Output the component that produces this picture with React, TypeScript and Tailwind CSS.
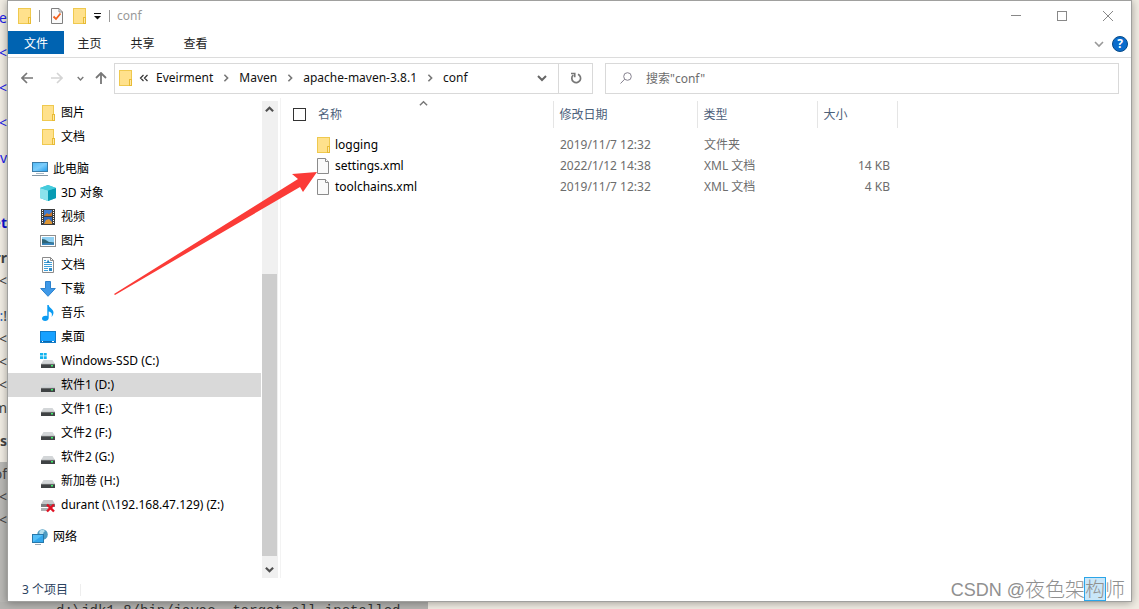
import type { ReactNode } from 'react';

type IconProps = { className?: string };

function FolderIcon({ className = '' }: IconProps) {
  return (
    <svg className={`h-4 w-3.5 shrink-0 ${className}`} viewBox="0 0 14 16" aria-hidden="true">
      <rect x="0.5" y="0.5" width="12" height="15" fill="#ffe18c" stroke="#efc94f" />
      <rect x="10.5" y="9.5" width="2" height="6" fill="#ffe9a6" stroke="#e8bb35" />
    </svg>
  );
}

function FileIcon() {
  return (
    <svg className="h-4 w-3.5 shrink-0" viewBox="0 0 14 16" aria-hidden="true">
      <path d="M0.5 0.5H8.5L11.5 3.5V15.5H0.5Z" fill="#fafafa" stroke="#8b8b8b" />
      <path d="M8.5 0.5V3.5H11.5" fill="#fff" stroke="#8b8b8b" />
    </svg>
  );
}

function CheckedPageIcon() {
  return (
    <svg className="h-4 w-3 shrink-0" viewBox="0 0 12 16" aria-hidden="true">
      <path d="M0.5 0.5H8L11.5 4V15.5H0.5Z" fill="#fafafa" stroke="#7f7f7f" />
      <path d="M8 0.5V4H11.5" fill="none" stroke="#8b8b8b" />
      <path d="M2.5 8.5L5 11L9.5 5.5" fill="none" stroke="#f2601d" strokeWidth="1.8" />
    </svg>
  );
}

function Icon16({ children }: { children: ReactNode }) {
  return (
    <svg className="h-4 w-4 shrink-0" viewBox="0 0 16 16" aria-hidden="true">
      {children}
    </svg>
  );
}

function FolderSmall() {
  return (
    <Icon16>
      <rect x="2.5" y="0.5" width="11" height="15" fill="#ffe18c" stroke="#efc94f" />
      <rect x="12.5" y="9.5" width="2" height="6" fill="#ffe9a6" stroke="#e8bb35" />
    </Icon16>
  );
}

function ComputerIcon() {
  return (
    <Icon16>
      <defs>
        <linearGradient id="screen" x1="0" y1="0" x2="1" y2="1">
          <stop offset="0" stopColor="#4db8f5" />
          <stop offset="0.5" stopColor="#7ccdfb" />
          <stop offset="1" stopColor="#1f9cec" />
        </linearGradient>
      </defs>
      <rect x="0.5" y="1.5" width="15" height="9" fill="url(#screen)" stroke="#3a7ca8" />
      <rect x="4" y="12" width="8" height="1" fill="#a9bac6" />
      <rect x="0" y="14" width="16" height="1" fill="#8496a3" />
    </Icon16>
  );
}

function CubeIcon() {
  return (
    <Icon16>
      <path d="M8 0L16 3V13L8 16L0 13V3Z" fill="#35c0d4" />
      <path d="M0 3L8 5.5V16L0 13Z" fill="#8be3ec" />
      <path d="M8 5.5L16 3V13L8 16Z" fill="#079bb3" />
      <path d="M0 3L8 0L16 3L8 5.5Z" fill="#45cbdc" />
    </Icon16>
  );
}

function FilmIcon() {
  return (
    <Icon16>
      <rect x="1" y="0" width="14" height="16" fill="#3c3c3c" />
      <rect x="4" y="1" width="8" height="6" fill="#3d7bd0" />
      <path d="M4 7L7 4L9 5.5L12 3V7Z" fill="#c97528" />
      <rect x="4" y="8" width="8" height="7" fill="#2f68bd" />
      <path d="M4 15L6 11L9 10L12 13V15Z" fill="#dd9635" />
      <path d="M2.5 1V15M13.5 1V15" stroke="#fff" strokeDasharray="1 1" />
    </Icon16>
  );
}

function PictureIcon() {
  return (
    <Icon16>
      <rect x="0.5" y="2.5" width="15" height="11" fill="#fff" stroke="#8e8e8e" />
      <rect x="2" y="4" width="12" height="8" fill="#8fd0f3" />
      <path d="M2 6L5 6.5L9 9L14 9.5V12H2Z" fill="#2d6477" />
      <path d="M2 10.5Q8 9.5 14 10.5V12H2Z" fill="#3a86bd" />
    </Icon16>
  );
}

function DocumentIcon() {
  return (
    <Icon16>
      <path d="M2.5 0.5H10.5L13.5 3.5V15.5H2.5Z" fill="#fdfdfd" stroke="#8b8b8b" />
      <path d="M10.5 0.5V3.5H13.5" fill="none" stroke="#8b8b8b" />
      <path d="M4 3.5H6M4 5.5H7M9 5.5H12M4 7.5H12M4 9.5H12M4 11.5H8M4 13.5H8" stroke="#3fa0da" />
      <path d="M8 2.5L10 6H6.5Z" fill="#2883bd" />
      <rect x="9" y="11" width="3" height="3" fill="#2c8cc9" />
    </Icon16>
  );
}

function DownloadIcon() {
  return (
    <Icon16>
      <path d="M5.5 0.5H10.5V7.5H15.3L8 15.3L0.7 7.5H5.5Z" fill="#3e99e8" stroke="#2d82cd" />
    </Icon16>
  );
}

function MusicIcon() {
  return (
    <Icon16>
      <path
        d="M7.3 0H8.7C9 3 13.5 4 13.5 7.5C13.5 9.8 12.3 11.3 11.5 12C12.6 8.8 11.5 7.3 8.7 6.5V13C8.7 15 6.9 16 5.2 16C3.2 16 2 15 2 13.6C2 11.7 4.1 10.3 7.3 11Z"
        fill="#0b9bf2"
      />
    </Icon16>
  );
}

function DesktopIcon() {
  return (
    <Icon16>
      <rect x="0.5" y="2.5" width="15" height="11" fill="#17a1ff" stroke="#107bc8" />
      <path d="M1 12.5H15" stroke="#0d68ad" />
      <path d="M2 12.5H3M12 12.5H14" stroke="#fff" />
    </Icon16>
  );
}

function DriveBody() {
  return (
    <>
      <path d="M3.5 6H12.5L15 10H1Z" fill="#d3d6d8" />
      <rect x="1" y="10" width="14" height="4" fill="#3f4244" />
      <path d="M1 10.3H15" stroke="#85888a" strokeWidth="0.7" />
      <rect x="11" y="11" width="2" height="1.5" fill="#3df06a" />
    </>
  );
}

function DriveIcon() {
  return (
    <Icon16>
      <g transform="translate(0 1)">
        <DriveBody />
      </g>
    </Icon16>
  );
}

function SystemDriveIcon() {
  return (
    <Icon16>
      <g transform="translate(0 1)">
        <DriveBody />
      </g>
      <path d="M0 0H3V2.5H0ZM3.7 0H6.7V2.5H3.7ZM0 3.3H3V6H0ZM3.7 3.3H6.7V6H3.7Z" fill="#12b3ee" />
    </Icon16>
  );
}

function BrokenDriveIcon() {
  return (
    <Icon16>
      <path d="M3.5 3H12.5L15 7H1Z" fill="#c4c7c9" />
      <rect x="1" y="7" width="14" height="3" fill="#797c7e" />
      <rect x="1" y="11" width="8" height="3" fill="#aeb1b3" />
      <path d="M7 7.5L14 14.5M14 7.5L7 14.5" stroke="#e01224" strokeWidth="2.4" />
    </Icon16>
  );
}

function NetworkIcon() {
  return (
    <Icon16>
      <circle cx="10.5" cy="5.5" r="5.3" fill="#4d9cc2" />
      <path d="M8 1.5Q11 0 13 2L11 4L12 6L9 6L7 4Z" fill="#b5dfed" />
      <rect x="0.5" y="5.5" width="11" height="8" fill="#53bff8" stroke="#2778aa" />
      <path d="M1 13L11 6V13Z" fill="#32a7ec" />
      <path d="M3 15.5H9" stroke="#98a9b5" />
    </Icon16>
  );
}

function Chevron({ direction, className, stroke = 1.6 }: { direction: 'up' | 'down' | 'right'; className: string; stroke?: number }) {
  const paths = { up: 'M1 7L5 3L9 7', down: 'M1 3L5 7L9 3', right: 'M3 1L7 5L3 9' };
  return (
    <svg className={className} viewBox="0 0 10 10" fill="none" stroke="currentColor" strokeWidth={stroke} aria-hidden="true">
      <path d={paths[direction]} />
    </svg>
  );
}

type NavEntry = { label: string; icon: ReactNode; root?: boolean; selected?: boolean };

const navGroups: NavEntry[][] = [
  [
    { label: '图片', icon: <FolderSmall /> },
    { label: '文档', icon: <FolderSmall /> },
  ],
  [
    { label: '此电脑', icon: <ComputerIcon />, root: true },
    { label: '3D 对象', icon: <CubeIcon /> },
    { label: '视频', icon: <FilmIcon /> },
    { label: '图片', icon: <PictureIcon /> },
    { label: '文档', icon: <DocumentIcon /> },
    { label: '下载', icon: <DownloadIcon /> },
    { label: '音乐', icon: <MusicIcon /> },
    { label: '桌面', icon: <DesktopIcon /> },
    { label: 'Windows-SSD (C:)', icon: <SystemDriveIcon /> },
    { label: '软件1 (D:)', icon: <DriveIcon />, selected: true },
    { label: '文件1 (E:)', icon: <DriveIcon /> },
    { label: '文件2 (F:)', icon: <DriveIcon /> },
    { label: '软件2 (G:)', icon: <DriveIcon /> },
    { label: '新加卷 (H:)', icon: <DriveIcon /> },
    { label: 'durant (\\\\192.168.47.129) (Z:)', icon: <BrokenDriveIcon /> },
  ],
  [{ label: '网络', icon: <NetworkIcon />, root: true }],
];

const files = [
  { name: 'logging', date: '2019/11/7 12:32', type: '文件夹', size: '', folder: true },
  { name: 'settings.xml', date: '2022/1/12 14:38', type: 'XML 文档', size: '14 KB', folder: false },
  { name: 'toolchains.xml', date: '2019/11/7 12:32', type: 'XML 文档', size: '4 KB', folder: false },
];

function EditorEdge() {
  return (
    <div className="flex w-[7px] shrink-0 flex-col overflow-hidden text-[14px] leading-[23px] text-[#444]" aria-hidden="true">
      {['ve', '<', '<', '<', 'v'].map((text, i) => (
        <div key={i} className="flex h-[35px] items-center justify-end text-[#2020e8]">{text}</div>
      ))}
      <div className="mt-9 flex justify-end font-bold text-[#1010d0]">et</div>
      <div className="mt-3 flex justify-end font-bold">rr</div>
      <div className="flex justify-end">&lt;</div>
      <div className="mt-3 flex justify-end"><span className="text-[#2060c0]">:</span>!</div>
      <div className="flex justify-end">&lt;</div>
      <div className="flex justify-end">&lt;</div>
      <div className="flex justify-end">&lt;</div>
      <div className="flex justify-end">m</div>
      <div className="mt-2.5 flex justify-end font-bold">s</div>
      <div className="mt-2.5 flex-1 bg-[#b9b8b5]">
        <div className="flex justify-end">of</div>
        <div className="flex justify-end">&lt;</div>
        <div className="flex justify-end">&lt;</div>
      </div>
    </div>
  );
}

function TitleBar() {
  return (
    <header className="flex h-[30px] items-center justify-between">
      <div className="flex items-center pl-2.5">
        <FolderIcon />
        <span className="ml-[7px] h-3 w-px bg-[#999]" />
        <button className="ml-[11px]" aria-label="属性"><CheckedPageIcon /></button>
        <button className="ml-2.5" aria-label="新建文件夹"><FolderIcon /></button>
        <button className="ml-[7px]" aria-label="自定义快速访问工具栏">
          <svg className="h-2 w-[7px]" viewBox="0 0 7 8" aria-hidden="true"><path d="M0 1.5H7" stroke="#111" /><path d="M0 4H7L3.5 7.5Z" fill="#111" /></svg>
        </button>
        <span className="ml-2 h-3 w-px bg-[#999]" />
        <h1 className="ml-[7px] text-[#999]">conf</h1>
      </div>
      <div className="flex h-full text-[#888]">
        <button className="flex w-[46px] items-center justify-center" aria-label="最小化">
          <svg className="h-2.5 w-2.5" viewBox="0 0 10 10" aria-hidden="true"><path d="M0 4.5H10" stroke="currentColor" /></svg>
        </button>
        <button className="flex w-[46px] items-center justify-center" aria-label="最大化">
          <svg className="h-2.5 w-2.5" viewBox="0 0 10 10" aria-hidden="true"><rect x="0.5" y="0.5" width="9" height="9" fill="none" stroke="currentColor" /></svg>
        </button>
        <button className="flex w-[46px] items-center justify-center" aria-label="关闭">
          <svg className="h-2.5 w-2.5" viewBox="0 0 10 10" aria-hidden="true"><path d="M0 0L10 10M10 0L0 10" stroke="currentColor" /></svg>
        </button>
      </div>
    </header>
  );
}

function RibbonTabs() {
  return (
    <nav className="flex h-[27px] items-start justify-between border-b border-[#dcdcdc]">
      <div className="flex h-[23px] text-[#222]">
        <button className="w-14 bg-[#0063b1] pt-0.5 text-white">文件</button>
        {['主页', '共享', '查看'].map((tab) => (
          <button key={tab} className="w-[53px] pt-0.5 pr-0.5">{tab}</button>
        ))}
      </div>
      <div className="flex h-[26px] items-center gap-2 pr-[3px]">
        <button aria-label="展开功能区" className="text-[#999]"><Chevron direction="down" className="h-2.5 w-2.5" /></button>
        <button aria-label="帮助" className="flex h-4 w-4 items-center justify-center rounded-full border border-[#074a87] bg-[#0a6ccc] text-[12px] leading-3 font-bold text-white">?</button>
      </div>
    </nav>
  );
}

function AddressRow() {
  const crumbs = ['Eveirment', 'Maven', 'apache-maven-3.8.1', 'conf'];
  return (
    <div className="flex h-10 items-center pr-3 pl-[13px]">
      <div className="flex items-center text-[#777]">
        <button aria-label="后退">
          <svg className="h-3 w-3" viewBox="0 0 12 12" fill="none" stroke="currentColor" strokeWidth="1.7" aria-hidden="true"><path d="M12 6H1M6 1L1 6L6 11" /></svg>
        </button>
        <button aria-label="前进" className="ml-[18px] text-[#d4d4d4]">
          <svg className="h-3 w-3" viewBox="0 0 12 12" fill="none" stroke="currentColor" strokeWidth="1.6" aria-hidden="true"><path d="M0 6H11M6 1L11 6L6 11" /></svg>
        </button>
        <button aria-label="最近浏览的位置" className="ml-3.5"><Chevron direction="down" stroke={2} className="h-[7px] w-[7px]" /></button>
        <button aria-label="上移" className="ml-[11px]">
          <svg className="h-3 w-3" viewBox="0 0 12 12" fill="none" stroke="currentColor" strokeWidth="1.8" aria-hidden="true"><path d="M6 12V1M1 6L6 1L11 6" /></svg>
        </button>
      </div>
      <div className="ml-[7px] flex h-[31px] w-[479px] items-center border border-[#d9d9d9]">
        <FolderIcon className="ml-1" />
        <svg className="ml-1.5 h-2 w-2.5 text-[#333]" viewBox="0 0 10 8" fill="none" stroke="currentColor" strokeWidth="1.2" aria-hidden="true"><path d="M4.5 1L1.5 4L4.5 7M8.5 1L5.5 4L8.5 7" /></svg>
        <ol className="ml-[7px] flex flex-1 items-center">
          {crumbs.map((crumb, i) => (
            <li key={crumb} className="flex items-center">
              {i > 0 && <Chevron direction="right" stroke={2} className="mr-[9px] ml-[9px] h-2 w-2 text-[#777]" />}
              <a href="#" className="text-[#111]">{crumb}</a>
            </li>
          ))}
        </ol>
        <button aria-label="以前的位置" className="flex h-full w-8 items-center justify-center text-[#666]"><Chevron direction="down" stroke={2} className="h-2.5 w-2.5" /></button>
        <button aria-label="刷新" className="flex h-full w-[34px] items-center justify-center border-l border-[#d9d9d9] text-[#777]">
          <svg className="h-3 w-3" viewBox="0 0 12 12" fill="none" stroke="currentColor" strokeWidth="1.7" aria-hidden="true"><path d="M8 2.2A4.4 4.4 0 1 1 3.2 3" /><path d="M1 1.5H4.7V5.2" /></svg>
        </button>
      </div>
      <label className="ml-3 flex h-[31px] flex-1 items-center border border-[#d9d9d9] pl-3.5">
        <svg className="h-3 w-3" viewBox="0 0 12 12" fill="none" stroke="#86828f" aria-hidden="true"><circle cx="7.5" cy="4.5" r="3.8" /><path d="M4.7 7.2L0.5 11.5" /></svg>
        <input type="search" aria-label="搜索" placeholder={'搜索"conf"'} className="ml-3.5 min-w-0 flex-1 pt-0.5 outline-none placeholder:text-[#6d6d6d]" />
      </label>
    </div>
  );
}

function NavigationPane() {
  return (
    <aside className="flex w-[273px] shrink-0 border-r border-[#f3f3f3]">
      <div className="flex flex-1 flex-col gap-2 pt-[3px]">
        {navGroups.map((group, g) => (
          <ul key={g}>
            {group.map((item) => (
              <li key={item.label}>
                <a
                  href="#"
                  className={`flex h-6 items-center gap-[5px] text-black ${item.root ? 'pl-6' : 'pl-8'} ${item.selected ? 'mr-px bg-[#d9d9d9]' : ''}`}
                >
                  {item.icon}
                  {item.label}
                </a>
              </li>
            ))}
          </ul>
        ))}
      </div>
      <div className="mt-[3px] mr-0.5 flex w-4 flex-col bg-[#f0f0f0] text-[#505050]">
        <button aria-label="向上滚动" className="flex h-[17px] items-center justify-center pr-px"><Chevron direction="up" stroke={2.4} className="h-[9px] w-[9px]" /></button>
        <div className="grow-[156]" />
        <div className="mr-px grow-[282] bg-[#cdcdcd]" />
        <button aria-label="向下滚动" className="flex h-[22px] items-center justify-center pt-1 pr-px"><Chevron direction="down" stroke={2.4} className="h-[9px] w-[9px]" /></button>
      </div>
    </aside>
  );
}

function FileList() {
  return (
    <main className="relative flex-1">
      <Chevron direction="up" className="absolute top-px left-[138px] h-[9px] w-[9px] text-[#777]" />
      <table className="mt-[3px] w-[616px] table-fixed border-collapse text-left">
        <thead>
          <tr className="h-[27px] text-[#4c607a]">
            <th className="w-[272px] border-r border-[#e5e5e5] font-normal">
              <span className="flex items-center gap-3 pl-3">
                <input type="checkbox" aria-label="全选" className="h-[13px] w-[13px] appearance-none border border-[#333]" />
                名称
              </span>
            </th>
            <th className="w-36 border-r border-[#e5e5e5] pl-1.5 font-normal">修改日期</th>
            <th className="w-[120px] border-r border-[#e5e5e5] pl-1.5 font-normal">类型</th>
            <th className="w-20 border-r border-[#e5e5e5] pl-1.5 font-normal">大小</th>
          </tr>
        </thead>
        <tbody className="text-[#6d6d6d] before:block before:h-1.5">
          {files.map((file) => (
            <tr key={file.name} className="h-[21px]">
              <td className="pl-9">
                <a href="#" className="flex items-center gap-1 text-black">
                  {file.folder ? <FolderIcon /> : <FileIcon />}
                  {file.name}
                </a>
              </td>
              <td className="pl-[7px]">{file.date}</td>
              <td className="pl-[7px]">{file.type}</td>
              <td className="pr-[7px] text-right">{file.size}</td>
            </tr>
          ))}
        </tbody>
      </table>
    </main>
  );
}

export default function App() {
  return (
    <div className="relative flex min-h-screen flex-col overflow-hidden bg-[#f0ece3] font-['Noto_Sans','Noto_Sans_CJK_SC',sans-serif] text-[12px] leading-4">
      <div className="flex flex-1">
        <EditorEdge />
        <div className="relative flex min-w-0 flex-1 flex-col border border-[#a0a09e] bg-white shadow-[0_1px_8px_rgba(0,0,0,0.35)]">
          <TitleBar />
          <RibbonTabs />
          <AddressRow />
          <div className="flex flex-1">
            <NavigationPane />
            <FileList />
          </div>
          <footer className="flex h-[23px] items-center pl-3.5 text-[#2b4260]">
            <span>3 个项目</span>
            <span className="ml-3 h-3 w-px bg-[#eee]" />
          </footer>
          <div className="absolute right-1.5 bottom-0 flex h-6 items-center text-[#909090]">
            <span className="pt-0.5 font-['Liberation_Sans',sans-serif] text-[18px]">CSDN @</span>
            <span className="flex items-center font-['Noto_Sans_CJK_SC',sans-serif] text-[20px] leading-6 font-light">
              夜色架
              <span className="-mx-px h-6 border border-[#2ba5e8] bg-[#c9e6f8] leading-[22px]">构</span>
              师
            </span>
          </div>
        </div>
        <div className="w-[7px] shrink-0" />
      </div>
      <div className="flex h-[7px] overflow-hidden" aria-hidden="true">
        <div className="w-[428px] overflow-hidden bg-[#b4b3b0] pt-px pl-14 font-['Liberation_Mono',monospace] text-[14px] leading-4 whitespace-nowrap text-[#333]">
          <span>d:\jdk1.8/bin/javac -target all installed</span>
        </div>
      </div>
      <svg className="pointer-events-none absolute top-[170px] left-[112px] h-[126px] w-[208px]" viewBox="112 170 208 126" aria-hidden="true">
        <path d="M114 294L298 179L292 174L317 172L303 192L300 187L115 295Z" fill="#fb3b37" />
      </svg>
    </div>
  );
}
